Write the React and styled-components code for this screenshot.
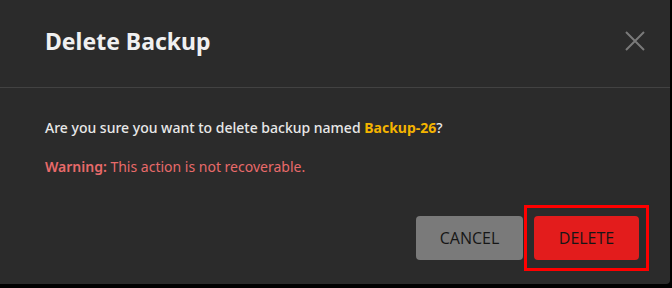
import React from "react";
import styled, { createGlobalStyle } from "styled-components";

const GlobalStyle = createGlobalStyle`
  html, body {
    margin: 0;
    padding: 0;
    background: #000;
  }
  body {
    font-family: "Noto Sans", "Open Sans", sans-serif;
  }
`;

const Modal = styled.div`
  width: 670px;
  height: 284px;
  background: #2b2b2b;
  border-bottom-right-radius: 4px;
  display: flex;
  flex-direction: column;
`;

const Header = styled.div`
  height: 88px;
  box-sizing: border-box;
  display: flex;
  align-items: center;
  justify-content: space-between;
  padding: 0 25px 6px 45px;
  border-bottom: 1px solid #424242;
`;

const Title = styled.h2`
  margin: 0;
  font-size: 23px;
  font-weight: 700;
  color: #f0f0f0;
`;

const CloseButton = styled.button`
  border: 0;
  background: none;
  padding: 0;
  width: 20px;
  height: 20px;
  display: flex;
  cursor: pointer;
`;

const Body = styled.div`
  padding: 30px 45px 0;
  display: flex;
  flex-direction: column;
  gap: 20px;
`;

const Text = styled.p`
  margin: 0;
  font-size: 14px;
  line-height: 19px;
  font-weight: ${(p) => (p.$warning ? 400 : 500)};
  color: ${(p) => (p.$warning ? "#e86a6a" : "#e8e8e8")};
`;

const Highlight = styled.span`
  font-weight: ${(p) => p.$weight || 700};
  color: ${(p) => p.$color};
`;

const Footer = styled.div`
  margin-top: auto;
  display: flex;
  justify-content: flex-end;
  align-items: center;
  gap: 1px;
  padding: 0 21px 13px;
`;

const FocusRing = styled.div`
  border: 3px solid #ff0000;
  padding: 8px 7px;
  display: flex;
`;

const Button = styled.button`
  height: 44px;
  width: ${(p) => p.$width}px;
  border: 0;
  border-radius: 4px;
  background: ${(p) => p.$bg};
  color: #161616;
  font-family: "Open Sans", "Noto Sans", sans-serif;
  font-size: 16px;
  text-transform: uppercase;
  cursor: pointer;
`;

export default function App() {
  return (
    <>
      <GlobalStyle />
      <Modal>
        <Header>
          <Title>Delete Backup</Title>
          <CloseButton aria-label="Close">
            <svg width="20" height="20" viewBox="0 0 20 20">
              <path
                d="M1 1 L19 19 M19 1 L1 19"
                stroke="#7a7a7a"
                strokeWidth="2"
                fill="none"
              />
            </svg>
          </CloseButton>
        </Header>
        <Body>
          <Text>
            Are you sure you want to delete backup named{" "}
            <Highlight $color="#f4b400">Backup-26</Highlight>?
          </Text>
          <Text $warning>
            <Highlight $color="#e86a6a" $weight={600}>
              Warning:
            </Highlight>{" "}
            This action is not recoverable.
          </Text>
        </Body>
        <Footer>
          <Button $width={107} $bg="#7a7a7a">
            Cancel
          </Button>
          <FocusRing>
            <Button $width={105} $bg="#e31c1c">
              Delete
            </Button>
          </FocusRing>
        </Footer>
      </Modal>
    </>
  );
}
